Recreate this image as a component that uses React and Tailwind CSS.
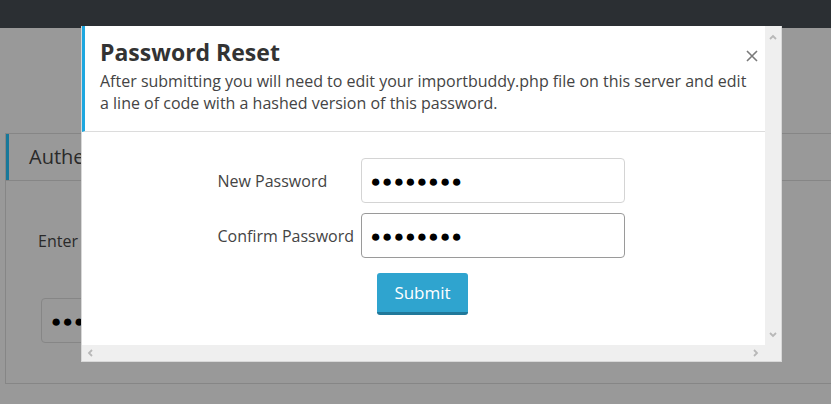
import React from "react";

function Chevron({ dir }) {
  const paths = {
    up: "M1 5 L4 2 L7 5",
    down: "M1 2 L4 5 L7 2",
    left: "M5 1 L2 4 L5 7",
    right: "M2 1 L5 4 L2 7",
  };
  return (
    <svg width="8" height="8" viewBox="0 0 8 8" className="block">
      <path d={paths[dir]} fill="none" stroke="#b8b8b8" strokeWidth="1.8" />
    </svg>
  );
}

export default function App() {
  return (
    <div
      className="relative w-[831px] h-[404px] overflow-hidden bg-[#999999]"
      style={{ fontFamily: '"Open Sans", "Liberation Sans", sans-serif' }}
    >
      {/* top navbar */}
      <div className="h-[28px] bg-[#2b2f33]" />

      {/* background page (dimmed) */}
      <div className="ml-[5px] mt-[105px] h-[251px] border border-r-0 border-[#868686]">
        <div className="h-[47px] border-b border-[#868686] flex items-center">
          <div className="w-[3px] h-full bg-[#17789a]" />
          <span className="ml-[20px] text-[20px] text-[#2a2a2a]">Authentication</span>
        </div>
        <div className="pl-[32px] pt-[49px] text-[16px] text-[#2a2a2a] leading-[22px]">
          Enter your password
        </div>
        <div className="ml-[35px] mt-[46px] w-[200px] h-[45px] rounded-[4px] border border-[#868686] flex items-center pl-[9px] text-[17px] tracking-[1.2px] text-black">
          ●●●●●●●●
        </div>
      </div>

      {/* modal */}
      <div className="absolute left-[81px] top-[26px] w-[701px] h-[336px] bg-white border-l border-b border-r border-[#d8d8d8] flex">
        <div className="flex-1 flex flex-col min-w-0">
          <div className="flex-1 min-h-0">
            {/* header */}
            <div className="relative border-l-[3px] border-[#1ea7df] border-b border-b-[#dcdcdc] pl-[15px] pr-[8px] pt-[11px] h-[106px]">
              <h2 className="text-[23px] font-bold leading-[31px] text-[#333333]">Password Reset</h2>
              <p className="mt-[2px] text-[16px] leading-[22px] text-[#444444]">
                After submitting you will need to edit your importbuddy.php file on this server and edit a line of code with a hashed version of this password.
              </p>
              <button className="absolute right-[6px] top-[23px] w-[14px] h-[14px] flex items-center justify-center">
                <svg width="12" height="12" viewBox="0 0 12 12">
                  <path d="M1 1 L11 11 M11 1 L1 11" stroke="#7a7a7a" strokeWidth="1.6" />
                </svg>
              </button>
            </div>

            {/* body */}
            <div className="flex flex-col items-center pt-[26px]">
              <div className="flex flex-col gap-[10px] mr-[5px]">
                <div className="flex items-center">
                  <label className="w-[143px] text-[16px] text-[#444444]">New Password</label>
                  <div className="w-[264px] h-[45px] rounded-[4px] border border-[#d4d4d4] flex items-center pl-[9px] text-[17px] tracking-[1.3px] text-black">
                    ●●●●●●●●
                  </div>
                </div>
                <div className="flex items-center">
                  <label className="w-[143px] text-[16px] text-[#444444]">Confirm Password</label>
                  <div className="w-[264px] h-[45px] rounded-[4px] border border-[#9a9a9a] flex items-center pl-[9px] text-[17px] tracking-[1.3px] text-black">
                    ●●●●●●●●
                  </div>
                </div>
              </div>
              <button className="mt-[15px] mr-[2px] w-[91px] h-[42px] rounded-[3px] bg-[#2fa4cf] border-b-[3px] border-[#21789a] text-white text-[17px] leading-[24px]">
                Submit
              </button>
            </div>
          </div>
          {/* horizontal scrollbar */}
          <div className="h-[16px] bg-[#efefef] flex items-center justify-between px-[5px]">
            <Chevron dir="left" />
            <Chevron dir="right" />
          </div>
        </div>
        {/* vertical scrollbar */}
        <div className="w-[16px] bg-[#efefef] flex flex-col items-center justify-between pt-[8px] pb-[22px]">
          <Chevron dir="up" />
          <Chevron dir="down" />
        </div>
      </div>
    </div>
  );
}
